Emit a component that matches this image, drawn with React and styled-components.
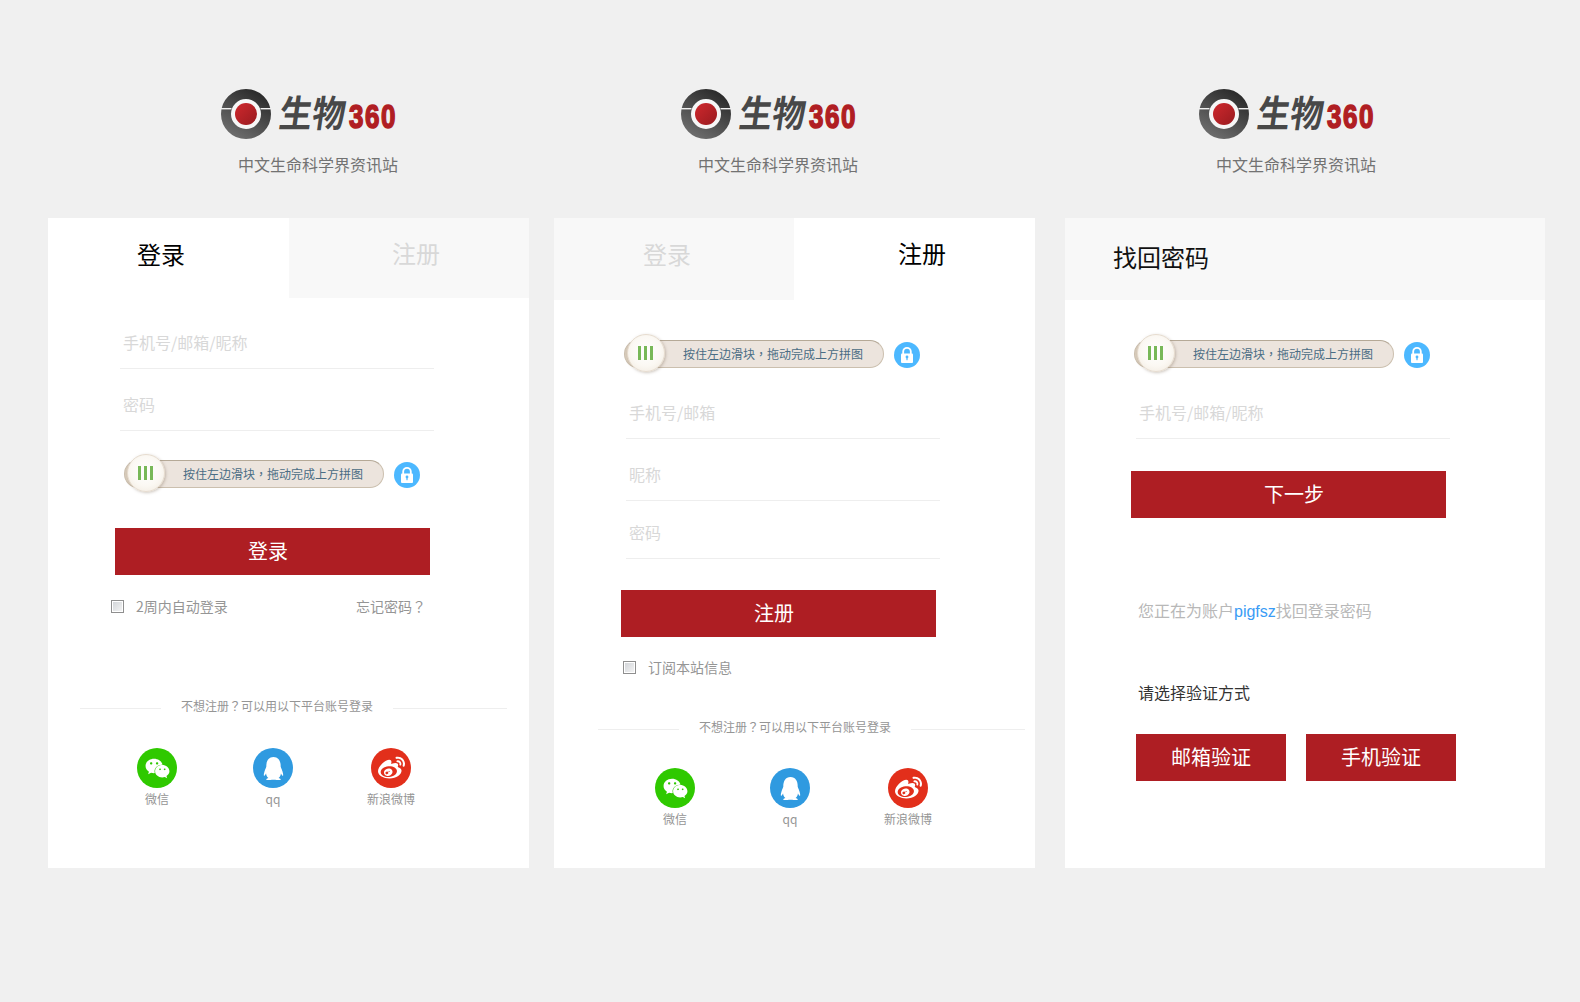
import styled, { createGlobalStyle } from "styled-components";
import { FaWeixin, FaQq, FaWeibo } from "react-icons/fa";

const FONT = `"Noto Sans CJK SC", "Liberation Sans", sans-serif`;

const GlobalStyle = createGlobalStyle`
  html, body {
    margin: 0;
    padding: 0;
    background: #f0f0f0;
  }
  body {
    font-family: ${FONT};
  }
  * {
    box-sizing: border-box;
  }
`;

const Page = styled.div`
  display: flex;
  width: 1580px;
  height: 1002px;
  padding-left: 48px;
  overflow: hidden;
`;

const Column = styled.section`
  width: ${(p) => p.$width}px;
  margin-left: ${(p) => p.$left}px;
  flex-shrink: 0;
`;

const Brand = styled.header`
  height: 218px;
  padding: 89px 0 0 ${(p) => p.$left}px;
`;

const LogoRow = styled.div`
  display: flex;
  align-items: center;
  height: 50px;
`;

const LogoMark = styled.svg`
  display: block;
  flex-shrink: 0;
  width: 50px;
  height: 50px;
`;

const LogoWord = styled.span`
  display: block;
  margin: -6px 0 0 9px;
  color: #484848;
  font-size: 33px;
  font-weight: 700;
  line-height: 40px;
  white-space: nowrap;
  transform: scaleY(1.12) skewX(-9deg);
`;

const LogoNumber = styled.span`
  display: block;
  margin: 4px 0 0 3px;
  color: #b01e23;
  font-family: "Liberation Sans", sans-serif;
  font-size: 26px;
  font-weight: 700;
  line-height: 30px;
  letter-spacing: 1.5px;
  white-space: nowrap;
  -webkit-text-stroke: 1.2px #b01e23;
  transform: scaleY(1.3);
`;

const Tagline = styled.div`
  margin: 13px 0 0 17px;
  font-size: 16px;
  line-height: 24px;
  color: #727272;
  white-space: nowrap;
`;

const Panel = styled.div`
  height: 650px;
  background: #fff;
`;

const Tabs = styled.div`
  display: flex;
  height: 82px;
  background: #fff;
`;

const Tab = styled.div`
  flex: 0 0 ${(p) => p.$width}px;
  height: ${(p) => (p.$active ? 82 : p.$short ? 80 : 82)}px;
  padding: ${(p) => p.$pad}px 0 0 ${(p) => p.$left}px;
  background: ${(p) => (p.$active ? "#fff" : "#f8f8f8")};
  color: ${(p) => (p.$active ? "#000" : "#d8d8d8")};
  font-size: 24px;
  line-height: 32px;
`;

const TitleBar = styled.div`
  height: 82px;
  padding: 23px 0 0 48px;
  background: #f8f8f8;
  color: #111;
  font-size: 24px;
  line-height: 32px;
`;

const Body = styled.div`
  padding-left: ${(p) => p.$left}px;
`;

const Field = styled.label`
  display: flex;
  align-items: flex-end;
  width: 314px;
  height: ${(p) => p.$height || 62}px;
  margin-top: ${(p) => p.$top || 0}px;
  padding: 0 0 14px 3px;
  border-bottom: 1px solid #eee;
`;

const FieldInput = styled.input`
  width: 100%;
  height: 24px;
  padding: 0;
  border: 0;
  outline: 0;
  background: transparent;
  font-family: ${FONT};
  font-size: 16px;
  line-height: 24px;
  color: #333;

  &::placeholder {
    color: #d8d8d8;
    opacity: 1;
  }
`;

const SliderRow = styled.div`
  display: flex;
  align-items: center;
  gap: 10px;
  margin: ${(p) => p.$top}px 0 0 ${(p) => p.$left}px;
`;

const Track = styled.div`
  position: relative;
  width: 260px;
  height: 28px;
  padding-left: 58px;
  border: 1px solid #cbbfae;
  border-top-color: #b5a997;
  border-radius: 14px;
  background: linear-gradient(to right, #d9cdbd 0, #d9cdbd 20px, #ece4dd 20px);
  color: #4a6c84;
  font-size: 12px;
  line-height: 25px;
  white-space: nowrap;
`;

const Knob = styled.span`
  position: absolute;
  left: 2px;
  top: -7px;
  display: flex;
  align-items: center;
  justify-content: center;
  gap: 3px;
  width: 38px;
  height: 38px;
  padding-right: 1px;
  border: 1px solid #e6dccf;
  border-radius: 50%;
  background: radial-gradient(circle at 50% 45%, #fff 0, #fbf8f3 55%, #f0e8dc 100%);
  box-shadow: 1px 1px 3px rgba(120, 100, 80, 0.35);
`;

const KnobBar = styled.i`
  display: block;
  width: 3px;
  height: 14px;
  background: #78b858;
`;

const LockBadge = styled.svg`
  display: block;
  width: 26px;
  height: 26px;
  margin-top: 2px;
`;

// fullwidth marks sit in the middle of their cell in the TC cut, like the reference
const Mark = styled.span`
  font-family: "Noto Sans CJK TC", sans-serif;
`;

const Submit = styled.button`
  display: block;
  width: ${(p) => p.$width || 315}px;
  height: 47px;
  margin: ${(p) => p.$top || 0}px 0 0 ${(p) => p.$left || 0}px;
  padding: 0 ${(p) => p.$right || 0}px 2px ${(p) => p.$indent || 0}px;
  border: 0;
  background: #ae1e23;
  color: #fff;
  font-family: ${FONT};
  font-size: 20px;
  line-height: 45px;
`;

const CheckRow = styled.div`
  display: flex;
  align-items: center;
  justify-content: space-between;
  width: ${(p) => p.$width}px;
  height: 20px;
  margin: ${(p) => p.$top}px 0 0 ${(p) => p.$left}px;
  color: #959595;
  font-size: 14px;
  line-height: 20px;
`;

const CheckLabel = styled.label`
  display: flex;
  align-items: center;
  gap: 12px;
`;

const CheckBox = styled.input`
  width: 13px;
  height: 13px;
  margin: 0;
  appearance: none;
  border: 1px solid #8f8f8f;
  outline: 1px solid #fff;
  outline-offset: -2px;
  background: linear-gradient(135deg, #cfd2d6 0, #f6f6f6 100%);
`;

const Divider = styled.div`
  display: grid;
  grid-template-columns: 81px auto 114px;
  align-items: center;
  column-gap: 20px;
  width: 427px;
  height: 20px;
  margin: ${(p) => p.$top}px 0 0 ${(p) => p.$left}px;
  color: #959595;
  font-size: 12px;
  line-height: 16px;
  white-space: nowrap;
`;

const DividerLine = styled.i`
  display: block;
  height: 1px;
  background: #eee;
`;

const DividerText = styled.span`
  margin-top: -4px;
`;

const Socials = styled.div`
  display: grid;
  grid-template-columns: ${(p) => p.$first}px ${(p) => p.$second}px 40px;
  margin: ${(p) => p.$top}px 0 0 ${(p) => p.$left}px;
`;

const Social = styled.div`
  display: flex;
  flex-direction: column;
  align-items: center;
  width: 40px;
`;

const SocialIcon = styled.span`
  display: flex;
  align-items: center;
  justify-content: center;
  width: 40px;
  height: 40px;
  border-radius: 50%;
  background: ${(p) => p.$color};
  color: #fff;
  font-size: ${(p) => p.$size}px;
`;

const SocialName = styled.span`
  margin-top: 3px;
  color: #959595;
  font-size: 12px;
  line-height: 16px;
  white-space: nowrap;
`;

const Notice = styled.p`
  margin: 80px 0 0 2px;
  color: #b8b8b8;
  font-size: 16px;
  line-height: 24px;
  white-space: nowrap;
`;

const Account = styled.span`
  color: #3a9cf5;
  font-family: "Liberation Sans", sans-serif;
`;

const Hint = styled.p`
  margin: 56px 0 0 2px;
  color: #333;
  font-size: 16px;
  line-height: 24px;
`;

const VerifyRow = styled.div`
  display: flex;
  gap: 20px;
  margin-top: 30px;
`;

function Logo() {
  return (
    <LogoRow>
      <LogoMark viewBox="0 0 50 50">
        <defs>
          <linearGradient id="ringShade" x1="0.8" y1="0" x2="0.2" y2="1">
            <stop offset="0" stopColor="#2d2d2d" />
            <stop offset="1" stopColor="#6a6a6a" />
          </linearGradient>
          <linearGradient id="coreShade" x1="0" y1="0" x2="1" y2="1">
            <stop offset="0" stopColor="#cf282d" />
            <stop offset="1" stopColor="#991b20" />
          </linearGradient>
        </defs>
        <circle cx="25" cy="25" r="20" fill="#f6f6f6" stroke="url(#ringShade)" strokeWidth="10" />
        <rect x="0" y="19" width="10.5" height="1.4" fill="#f0f0f0" />
        <rect x="39.5" y="19" width="10.5" height="1.4" fill="#f0f0f0" />
        <circle cx="25" cy="25" r="11" fill="url(#coreShade)" />
      </LogoMark>
      <LogoWord>生物</LogoWord>
      <LogoNumber>360</LogoNumber>
    </LogoRow>
  );
}

function Heading({ left }) {
  return (
    <Brand $left={left}>
      <Logo />
      <Tagline>中文生命科学界资讯站</Tagline>
    </Brand>
  );
}

function Slider({ top, left }) {
  return (
    <SliderRow $top={top} $left={left}>
      <Track>
        <Knob>
          <KnobBar />
          <KnobBar />
          <KnobBar />
        </Knob>
        按住左边滑块<Mark>，</Mark>拖动完成上方拼图
      </Track>
      <LockBadge viewBox="0 0 26 26">
        <circle cx="13" cy="13" r="13" fill="#4cb8ff" />
        <path d="M9.2 12V9.6a3.8 3.8 0 0 1 7.6 0V12" fill="none" stroke="#fff" strokeWidth="1.8" />
        <rect x="7" y="11.5" width="12" height="9.5" rx="1" fill="#fff" />
        <circle cx="13" cy="15" r="1.4" fill="#4cb8ff" />
        <rect x="12.4" y="15" width="1.2" height="3.2" fill="#4cb8ff" />
      </LockBadge>
    </SliderRow>
  );
}

function SocialLogins({ top, left, first, second }) {
  return (
    <Socials $top={top} $left={left} $first={first} $second={second}>
      <Social>
        <SocialIcon $color="#2fc900" $size={25}>
          <FaWeixin />
        </SocialIcon>
        <SocialName>微信</SocialName>
      </Social>
      <Social>
        <SocialIcon $color="#2f9ae0" $size={23}>
          <FaQq />
        </SocialIcon>
        <SocialName>qq</SocialName>
      </Social>
      <Social>
        <SocialIcon $color="#e22f1b" $size={27}>
          <FaWeibo />
        </SocialIcon>
        <SocialName>新浪微博</SocialName>
      </Social>
    </Socials>
  );
}

function OtherPlatforms({ top, left }) {
  return (
    <Divider $top={top} $left={left}>
      <DividerLine />
      <DividerText>
        不想注册<Mark>？</Mark>可以用以下平台账号登录
      </DividerText>
      <DividerLine />
    </Divider>
  );
}

export default function App() {
  return (
    <>
      <GlobalStyle />
      <Page>
        <Column $width={481} $left={0}>
          <Heading left={173} />
          <Panel>
            <Tabs>
              <Tab $active $width={241} $left={89} $pad={20}>登录</Tab>
              <Tab $short $width={240} $left={103} $pad={19}>注册</Tab>
            </Tabs>
            <Body $left={72}>
              <Field $top={7}>
                <FieldInput placeholder="手机号/邮箱/昵称" />
              </Field>
              <Field>
                <FieldInput placeholder="密码" />
              </Field>
              <Slider top={29} left={4} />
              <Submit $top={40} $left={-5} $right={9}>登录</Submit>
              <CheckRow $top={21} $left={-9} $width={315}>
                <CheckLabel>
                  <CheckBox type="checkbox" />
                  2周内自动登录
                </CheckLabel>
                <span>
                  忘记密码<Mark>？</Mark>
                </span>
              </CheckRow>
              <OtherPlatforms top={82} left={-40} />
              <SocialLogins top={30} left={17} first={116} second={118} />
            </Body>
          </Panel>
        </Column>

        <Column $width={481} $left={25}>
          <Heading left={127} />
          <Panel>
            <Tabs>
              <Tab $width={240} $left={89} $pad={20}>登录</Tab>
              <Tab $active $width={241} $left={104} $pad={19}>注册</Tab>
            </Tabs>
            <Body $left={72}>
              <Slider top={40} left={-2} />
              <Field $top={9}>
                <FieldInput placeholder="手机号/邮箱" />
              </Field>
              <Field>
                <FieldInput placeholder="昵称" />
              </Field>
              <Field $height={58}>
                <FieldInput placeholder="密码" />
              </Field>
              <Submit $top={31} $left={-5} $right={9}>注册</Submit>
              <CheckRow $top={20} $left={-3} $width={120}>
                <CheckLabel>
                  <CheckBox type="checkbox" />
                  订阅本站信息
                </CheckLabel>
              </CheckRow>
              <OtherPlatforms top={42} left={-28} />
              <SocialLogins top={29} left={29} first={115} second={118} />
            </Body>
          </Panel>
        </Column>

        <Column $width={480} $left={30}>
          <Heading left={134} />
          <Panel>
            <TitleBar>找回密码</TitleBar>
            <Body $left={71}>
              <Slider top={40} left={-2} />
              <Field $top={9}>
                <FieldInput placeholder="手机号/邮箱/昵称" />
              </Field>
              <Submit $top={32} $left={-5} $indent={11}>下一步</Submit>
              <Notice>
                您正在为账户<Account>pigfsz</Account>找回登录密码
              </Notice>
              <Hint>请选择验证方式</Hint>
              <VerifyRow>
                <Submit $width={150}>邮箱验证</Submit>
                <Submit $width={150}>手机验证</Submit>
              </VerifyRow>
            </Body>
          </Panel>
        </Column>
      </Page>
    </>
  );
}
